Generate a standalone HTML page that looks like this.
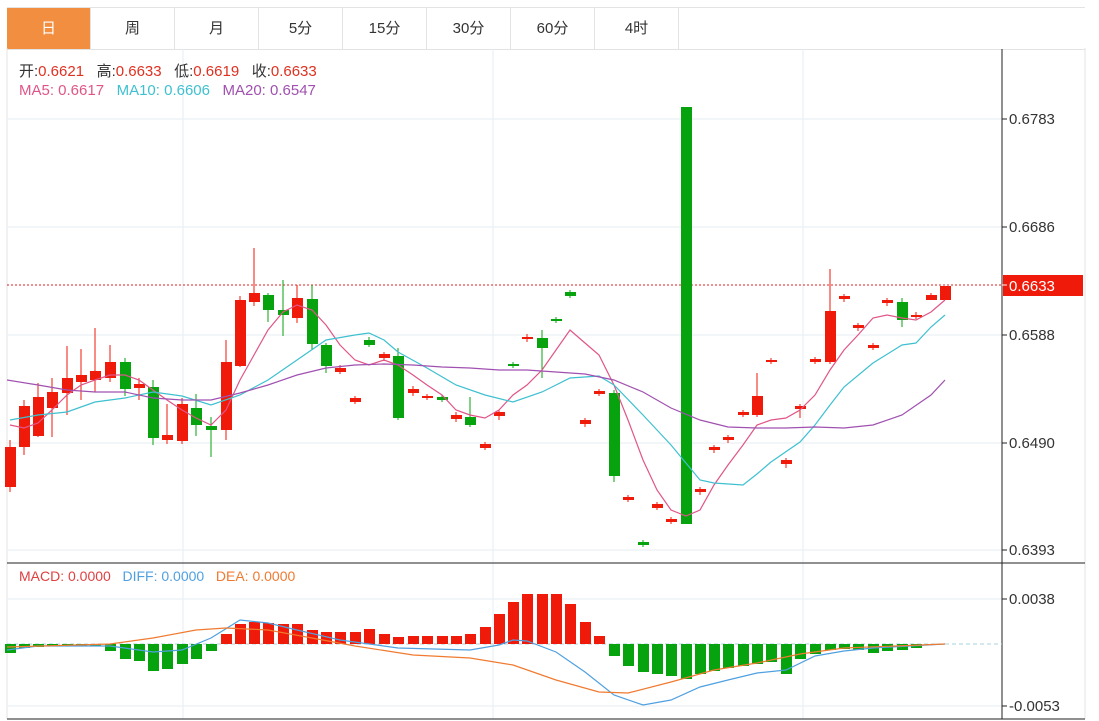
<!DOCTYPE html>
<html><head><meta charset="utf-8"><style>
body{margin:0;background:#fff;width:1099px;height:721px;overflow:hidden;font-family:"Liberation Sans","Noto Sans CJK SC",sans-serif}
.tabs{position:absolute;left:7px;top:7px;height:41px;width:1078px;border-top:1px solid #e3e3e3;border-bottom:1px solid #e3e3e3;display:flex}
.tab{width:83px;border-right:1px solid #e3e3e3;text-align:center;line-height:41px;font-size:15px;color:#333}
.tab.on{background:#f28e40;color:#fff}
.leg{position:absolute;left:19px;font-size:15px;white-space:pre}
</style></head><body>
<div class="tabs"><div class="tab on">日</div><div class="tab">周</div><div class="tab">月</div><div class="tab">5分</div><div class="tab">15分</div><div class="tab">30分</div><div class="tab">60分</div><div class="tab">4时</div></div>
<svg id="s" width="1099" height="721" style="position:absolute;left:0;top:0"></svg>
<div class="leg" style="top:60px;color:#333">开:<span style="color:#e03020">0.6621</span>   高:<span style="color:#e03020">0.6633</span>   低:<span style="color:#e03020">0.6619</span>   收:<span style="color:#e03020">0.6633</span></div>
<div class="leg" style="top:82px"><span style="color:#e05588">MA5: 0.6617</span>   <span style="color:#3ec0d0">MA10: 0.6606</span>   <span style="color:#a050b0">MA20: 0.6547</span></div>
<div class="leg" style="top:568px;font-size:14px"><span style="color:#e04040">MACD: 0.0000</span>   <span style="color:#50a0e0">DIFF: 0.0000</span>   <span style="color:#f07a30">DEA: 0.0000</span></div>
<script>
var R='#f01a0a',G='#06a30e',h='';
h+='<line x1="7" y1="48" x2="7" y2="719" stroke="#e3e3e3"/><line x1="1085" y1="48" x2="1085" y2="719" stroke="#e3e3e3"/>';
[119,227,335,443,550,599,706].forEach(y=>h+='<line x1="7" y1="'+y+'" x2="1002" y2="'+y+'" stroke="#e6eef2"/>');
[183,493,803].forEach(x=>h+='<line x1="'+x+'" y1="49" x2="'+x+'" y2="719" stroke="#e6eef2"/>');
h+='<line x1="1002" y1="49" x2="1002" y2="719" stroke="#222"/><line x1="7" y1="563" x2="1085" y2="563" stroke="#222"/><line x1="7" y1="719" x2="1085" y2="719" stroke="#222"/>';
var lab=[[119,'0.6783'],[227,'0.6686'],[335,'0.6588'],[443,'0.6490'],[550,'0.6393'],[599,'0.0038'],[706,'-0.0053']];
lab.forEach(l=>h+='<line x1="1002" y1="'+l[0]+'" x2="1007" y2="'+l[0]+'" stroke="#222"/><text x="1009" y="'+(l[0]+5)+'" font-size="15" fill="#333">'+l[1]+'</text>');
h+='<line x1="7" y1="285" x2="1002" y2="285" stroke="#e02020" stroke-dasharray="2,2"/><rect x="1003" y="275" width="80" height="21" fill="#f01a0a"/><line x1="1002" y1="285" x2="1007" y2="285" stroke="#fff"/><text x="1009" y="291" font-size="15" fill="#fff">0.6633</text>';
var c=[[10,440,447,487,492,R],[24,400,406,447,455,R],[38,383,397,436,437,R],[52,378,392,408,437,R],[67,346,378,393,415,R],[81,349,375,382,400,R],[95,328,371,380,392,R],[110,345,362,378,382,R],[125,358,362,389,396,G],[139,378,384,388,400,R],[153,380,387,438,445,G],[167,404,435,440,444,R],[182,398,404,441,444,R],[196,394,408,425,436,G],[211,417,426,430,457,G],[226,340,362,430,440,R],[240,296,300,366,367,R],[254,248,293,302,306,R],[268,293,295,310,322,G],[283,280,310,315,336,G],[297,285,298,318,323,R],[312,285,299,344,350,G],[326,343,345,366,373,G],[340,365,368,372,374,R],[355,396,398,402,404,R],[369,337,340,345,347,G],[384,352,354,358,361,R],[398,348,356,418,420,G],[413,386,389,393,396,R],[427,394,396,398,400,R],[442,395,397,400,402,G],[456,412,415,419,422,R],[470,397,417,425,427,G],[485,442,444,448,450,R],[499,410,412,416,420,R],[513,362,364,366,368,G],[527,334,337,339,342,R],[542,330,338,348,378,G],[556,317,319,321,323,G],[570,290,292,296,298,G],[585,418,420,424,427,R],[599,389,391,394,396,R],[614,390,393,476,482,G],[628,495,497,500,502,R],[643,540,542,545,547,G],[657,502,504,508,510,R],[671,517,519,522,524,R],[686,107,107,524,524,G],[700,487,489,492,495,R],[714,445,447,450,453,R],[728,435,437,440,443,R],[743,410,412,415,417,R],[757,373,396,415,417,R],[771,358,360,362,364,R],[786,458,460,464,468,R],[800,404,406,409,418,R],[815,357,359,362,364,R],[830,269,311,362,364,R],[844,294,296,299,302,R],[858,323,325,328,331,R],[873,343,345,348,350,R],[887,298,300,303,306,R],[902,298,302,320,327,G],[916,312,315,317,319,R],[931,293,295,300,300,R],[945,286,286,300,300,R]];
c.forEach(d=>{h+='<line x1="'+d[0]+'" y1="'+d[1]+'" x2="'+d[0]+'" y2="'+d[4]+'" stroke="'+d[5]+'"/><rect x="'+(d[0]-5)+'" y="'+d[2]+'" width="11" height="'+Math.max(2,d[3]-d[2])+'" fill="'+d[5]+'"/>';});
function pl(p,col){h+='<polyline fill="none" stroke="'+col+'" stroke-width="1.2" points="'+p.join(' ')+'"/>';}
pl([[10,425],[24,428],[38,423],[52,410],[67,395],[81,385],[95,380],[110,375],[125,375],[139,380],[153,390],[167,400],[182,410],[196,418],[211,425],[226,410],[240,380],[254,355],[268,330],[283,312],[297,305],[312,310],[326,325],[340,345],[355,360],[369,365],[384,360],[398,365],[413,375],[427,385],[442,395],[456,410],[470,415],[485,418],[499,410],[513,395],[527,385],[542,370],[556,350],[570,330],[585,343],[599,355],[614,385],[628,420],[643,460],[657,490],[671,510],[686,516],[700,510],[714,485],[728,465],[743,445],[757,425],[771,420],[786,418],[800,410],[815,395],[830,370],[844,350],[858,335],[873,318],[887,315],[902,318],[916,320],[931,312],[945,300]],'#e05588');
pl([[10,420],[38,415],[67,412],[95,402],[125,398],[153,392],[182,396],[211,405],[240,395],[268,380],[297,360],[326,340],[355,335],[369,333],[384,340],[398,352],[427,368],[456,385],[485,395],[513,402],[542,392],[570,378],[599,376],[614,385],[643,415],[671,445],[700,480],[714,483],[743,485],[757,474],[771,462],[800,442],[815,425],[830,405],[844,387],[873,363],[902,345],[916,343],[931,327],[945,315]],'#3ec0d0');
pl([[7,380],[38,385],[67,390],[95,392],[125,392],[153,398],[182,400],[211,400],[240,393],[268,385],[297,375],[326,368],[355,365],[384,364],[413,365],[442,367],[470,368],[499,370],[527,370],[556,372],[585,374],[614,380],[643,392],[671,408],[700,420],[728,427],[757,428],[786,428],[815,427],[844,428],[873,425],[902,415],[931,395],[945,380]],'#a050b0');
h+='<line x1="7" y1="644" x2="1002" y2="644" stroke="#a8d0e0" stroke-dasharray="4,3"/>';
var m=[-9,-4,-3,-2,-2,-2,-2,-7,-15,-17,-27,-25,-20,-15,-7,10,20,22,21,20,20,14,12,12,12,15,10,7,8,8,8,8,10,17,30,42,50,50,50,40,22,8,-12,-22,-28,-30,-32,-35,-30,-27,-24,-22,-20,-18,-30,-15,-10,-6,-5,-6,-9,-7,-6,-4,-1,0];
m.forEach((v,i)=>{var x=c[i][0];h+='<rect x="'+(x-5)+'" y="'+(v>0?644-v:644)+'" width="11" height="'+Math.abs(v)+'" fill="'+(v>0?R:G)+'"/>';});
pl([[7,650],[38,646],[110,646],[153,652],[182,650],[211,638],[240,620],[268,623],[297,630],[340,640],[398,648],[470,650],[499,645],[513,640],[527,641],[556,652],[585,672],[614,695],[643,705],[671,700],[700,687],[728,680],[757,673],[786,670],[815,656],[844,651],[873,648],[945,644]],'#50a0e0');
pl([[7,647],[110,644],[153,638],[196,630],[226,628],[268,630],[312,638],[355,646],[413,655],[470,658],[513,665],[556,680],[599,692],[628,693],[671,682],[714,670],[757,663],[800,654],[844,648],[945,644]],'#f07a30');
document.getElementById('s').innerHTML=h;
</script>
</body></html>
